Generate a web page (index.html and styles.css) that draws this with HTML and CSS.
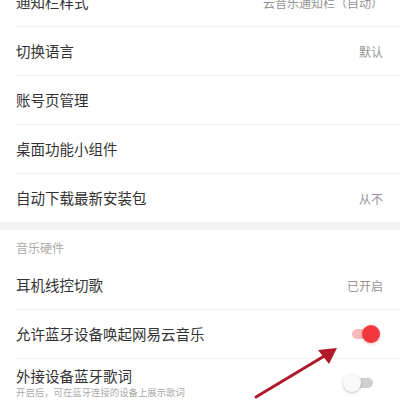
FILE: index.html
```html
<!DOCTYPE html>
<html lang="zh-CN">
<head>
    <meta charset="UTF-8">
    <meta name="viewport" content="width=device-width, initial-scale=1.0">
    <title>设置</title>
    <link rel="stylesheet" href="styles.css">
</head>
<body>
    <div class="page">
        <div class="group first">
            <div class="row">
                <span class="title">通知栏样式</span>
                <span class="value">云音乐通知栏（自动）</span>
            </div>
            <div class="row">
                <span class="title">切换语言</span>
                <span class="value">默认</span>
            </div>
            <div class="row">
                <span class="title">账号页管理</span>
            </div>
            <div class="row">
                <span class="title">桌面功能小组件</span>
            </div>
            <div class="row last">
                <span class="title">自动下载最新安装包</span>
                <span class="value">从不</span>
            </div>
        </div>

        <div class="gap"></div>

        <div class="group">
            <div class="section-head">音乐硬件</div>
            <div class="row">
                <span class="title">耳机线控切歌</span>
                <span class="value">已开启</span>
            </div>
            <div class="row">
                <span class="title">允许蓝牙设备唤起网易云音乐</span>
                <span class="switch on"><span class="knob"></span></span>
            </div>
            <div class="row last tall">
                <div class="text">
                    <span class="title">外接设备蓝牙歌词</span>
                    <span class="sub">开启后，可在蓝牙连接的设备上展示歌词</span>
                </div>
                <span class="switch"><span class="knob"></span></span>
            </div>
        </div>

        <!-- annotation arrow drawn over the screenshot -->
        <svg class="arrow" width="400" height="400" viewBox="0 0 400 400">
            <line x1="256" y1="397" x2="326" y2="355" stroke="#b3182a" stroke-width="3" stroke-linecap="round"/>
            <polygon points="337,348 318,350 329,364" fill="#b3182a"/>
        </svg>
    </div>
</body>
</html>
```

FILE: styles.css
```css
body {
    margin: 0;
    background: #fff;
    font-family: "Noto Sans CJK SC", "Noto Sans", sans-serif;
    overflow: hidden;
}
.page {
    position: relative;
    width: 400px;
    height: 400px;
    overflow: hidden;
}
.group.first {
    margin-top: -22px;
}
.row {
    display: flex;
    align-items: center;
    justify-content: space-between;
    height: 48px;
    margin-left: 16px;
    padding-right: 17px;
    border-bottom: 1px solid #efefef;
}
.row.last {
    border-bottom: none;
}
.row.tall {
    height: 40px;
    align-items: flex-start;
    padding-top: 8px;
}
.title {
    font-size: 14.5px;
    color: #333;
    line-height: 20px;
}
.value {
    font-size: 12px;
    color: #949494;
}
.text {
    display: flex;
    flex-direction: column;
}
.text .title {
    line-height: 18px;
}
.sub {
    font-size: 9.4px;
    color: #aaa;
    line-height: 14px;
}
.gap {
    height: 8px;
    background: #f4f4f4;
}
.section-head {
    height: 31px;
    padding-left: 16px;
    padding-top: 4px;
    box-sizing: border-box;
    display: flex;
    align-items: center;
    font-size: 12px;
    color: #ababab;
}
.switch {
    position: relative;
    width: 20px;
    height: 10px;
    border-radius: 5px;
    background: #d0d0d0;
    margin-right: 10px;
}
.switch .knob {
    position: absolute;
    top: -4px;
    left: -10px;
    width: 18px;
    height: 18px;
    border-radius: 50%;
    background: #fafafa;
    box-shadow: 0 1px 3px rgba(0, 0, 0, 0.25);
}
.switch.on {
    background: #f8b9bb;
    margin-right: 11px;
}
.switch.on .knob {
    left: 10px;
    background: #f2383d;
    box-shadow: 0 1px 3px rgba(200, 30, 30, 0.3);
}
.tall .switch {
    margin-top: 11px;
}
.arrow {
    position: absolute;
    left: 0;
    top: 0;
    pointer-events: none;
}
```
